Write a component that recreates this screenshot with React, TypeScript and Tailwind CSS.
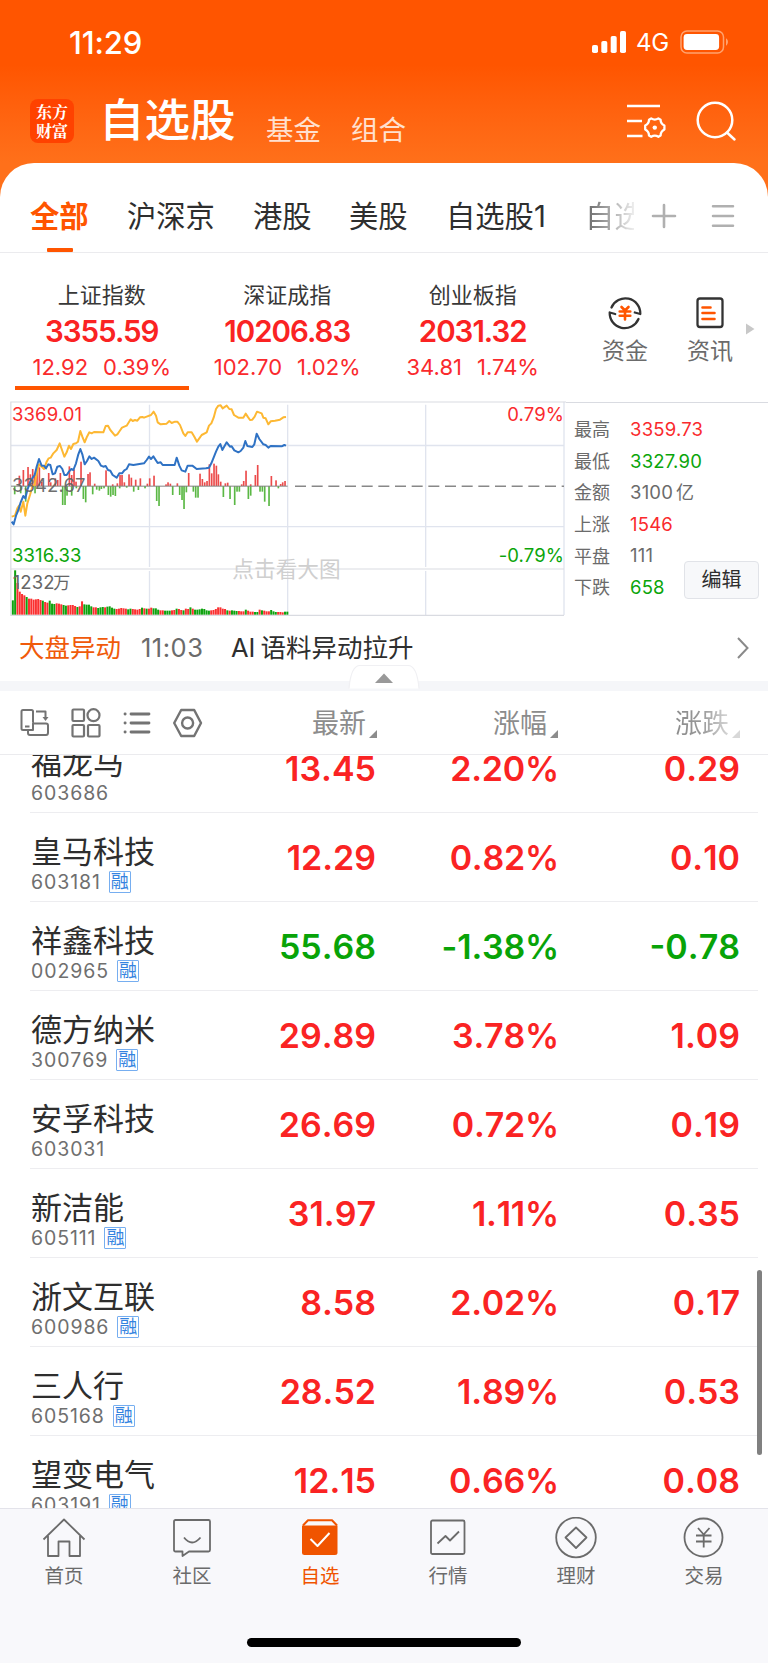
import React from 'react';

interface Stock {
  name: string;
  code: string;
  margin: boolean;
  price: string;
  percent: string;
  change: string;
}

const stocks: Stock[] = [
  { name: '福龙马', code: '603686', margin: false, price: '13.45', percent: '2.20%', change: '0.29' },
  { name: '皇马科技', code: '603181', margin: true, price: '12.29', percent: '0.82%', change: '0.10' },
  { name: '祥鑫科技', code: '002965', margin: true, price: '55.68', percent: '-1.38%', change: '-0.78' },
  { name: '德方纳米', code: '300769', margin: true, price: '29.89', percent: '3.78%', change: '1.09' },
  { name: '安孚科技', code: '603031', margin: false, price: '26.69', percent: '0.72%', change: '0.19' },
  { name: '新洁能', code: '605111', margin: true, price: '31.97', percent: '1.11%', change: '0.35' },
  { name: '浙文互联', code: '600986', margin: true, price: '8.58', percent: '2.02%', change: '0.17' },
  { name: '三人行', code: '605168', margin: true, price: '28.52', percent: '1.89%', change: '0.53' },
  { name: '望变电气', code: '603191', margin: true, price: '12.15', percent: '0.66%', change: '0.08' },
];

const indices = [
  { name: '上证指数', value: '3355.59', diff: '12.92', percent: '0.39%', active: true },
  { name: '深证成指', value: '10206.83', diff: '102.70', percent: '1.02%', active: false },
  { name: '创业板指', value: '2031.32', diff: '34.81', percent: '1.74%', active: false },
];

const stats = [
  { label: '最高', value: '3359.73', unit: '', color: 'text-[#fa2a2d]' },
  { label: '最低', value: '3327.90', unit: '', color: 'text-[#0aa50a]' },
  { label: '金额', value: '3100', unit: '亿', color: 'text-[#6b6b6b]' },
  { label: '上涨', value: '1546', unit: '', color: 'text-[#fa2a2d]' },
  { label: '平盘', value: '111', unit: '', color: 'text-[#6b6b6b]' },
  { label: '下跌', value: '658', unit: '', color: 'text-[#0aa50a]' },
];

// chart data, three units to the pixel
const avgLine =
  '35,365 45,362 52,340 57,332 62,350 70,320 76,362 82,325 90,300 97,275 104,270 110,235 117,208 125,215 132,222 140,200 146,190 152,188 160,175 170,165 179,145 186,165 193,185 200,172 207,152 213,162 220,147 228,145 234,140 241,108 247,125 254,142 261,125 268,112 275,115 282,111 310,112 317,93 324,92 331,105 345,122 352,118 359,108 366,98 373,95 380,92 392,73 398,78 405,75 412,77 420,67 427,66 432,68 440,65 453,60 461,50 468,62 473,82 482,88 500,86 508,78 515,84 525,80 532,80 540,90 550,115 556,123 563,112 575,112 583,125 591,140 605,120 620,112 627,92 634,85 641,68 648,42 655,32 662,31 668,40 680,32 688,42 695,43 702,60 715,68 730,68 737,56 743,65 750,75 757,74 764,65 771,50 785,55 790,68 797,70 805,88 812,79 825,77 840,74 850,67 858,66';
const priceLine =
  '35,380 41,388 48,362 55,345 62,322 70,303 76,310 82,285 90,262 98,248 104,240 110,215 117,192 125,212 132,212 138,220 145,208 151,210 158,238 165,235 172,215 180,213 187,222 193,240 200,240 207,230 214,222 220,225 228,205 235,178 241,162 247,178 254,208 261,198 268,184 275,192 282,188 295,198 303,212 310,215 317,213 324,225 331,227 338,240 350,248 358,235 366,235 373,226 380,222 387,208 400,210 432,205 440,195 447,185 453,192 460,184 473,204 482,202 488,210 524,210 530,188 538,212 545,226 556,230 563,212 577,212 590,222 618,220 627,218 634,205 648,170 655,155 661,147 667,165 680,142 690,155 695,154 703,166 715,172 722,168 730,158 736,138 742,153 757,156 763,148 770,116 778,132 790,148 797,150 805,158 812,153 845,154 853,150 858,152';

const upBars = [
  [58, 242], [70, 225], [84, 216], [91, 238], [98, 222], [104, 238], [111, 215], [118, 217], [125, 260], [146, 234],
  [152, 262], [166, 250], [173, 255], [181, 234], [208, 214], [215, 240], [222, 223], [228, 260], [243, 200], [264, 237],
  [270, 232], [284, 266], [318, 226], [338, 268], [352, 265], [360, 240], [366, 240], [373, 262], [387, 238], [394, 248],
  [407, 254], [421, 250], [442, 266], [449, 250], [462, 242], [498, 268], [504, 262], [511, 266], [532, 265], [566, 234],
  [600, 236], [607, 252], [614, 262], [621, 258], [628, 208], [635, 235], [642, 206], [649, 212], [655, 238], [662, 260],
  [676, 265], [683, 263], [725, 268], [731, 258], [738, 227], [752, 268], [766, 240], [773, 210], [814, 243], [828, 256],
  [842, 267], [848, 262], [855, 258],
];

const downBars = [
  [44, 298], [62, 295], [77, 320], [105, 295], [188, 330], [195, 330], [201, 302], [215, 302], [229, 280], [250, 312],
  [257, 322], [278, 298], [290, 284], [298, 287], [304, 282], [312, 280], [325, 300], [332, 305], [339, 300], [346, 303],
  [359, 280], [380, 278], [401, 290], [415, 285], [435, 280], [470, 318], [477, 333], [518, 300], [539, 300], [546, 315],
  [552, 342], [559, 292], [580, 290], [587, 308], [594, 308], [670, 306], [690, 312], [704, 330], [711, 290], [718, 290],
  [745, 312], [752, 302], [780, 290], [787, 290], [794, 320], [807, 333], [835, 280],
];

const volumes = [
  43, 133, 95, 69, 62, 58, 53, 48, 48, 45, 46, 47, 44, 42, 38, 36, 42, 33, 32, 34, 33, 31, 29, 27, 28, 29, 29, 26, 23, 25,
  40, 31, 30, 30, 25, 22, 22, 20, 22, 23, 22, 24, 25, 21, 18, 17, 18, 20, 19, 18, 16, 18, 17, 16, 15, 17, 21, 19, 18, 18,
  21, 19, 19, 15, 13, 13, 12, 12, 12, 13, 14, 18, 17, 14, 13, 18, 17, 22, 18, 15, 15, 16, 18, 17, 13, 12, 13, 14, 17, 22,
  22, 18, 17, 13, 12, 13, 12, 11, 11, 10, 10, 15, 12, 9, 9, 8, 8, 15, 13, 12, 10, 10, 14, 10, 8, 8, 8, 7, 9, 9,
];
const volumeColors =
  'ggrrrrgrrrrrrgrrgggrrrggrrrrgrrggggrrgggrggggrrrrrggrrrrgrgrrgggrrgggrrgrrgrrgrgggggggrrrrrrrgrgggrrrgrrrggrgrrrgggrrrg';

const RedUp = 'text-[#fa2323]';
const GreenDown = 'text-[#08a308]';

const StatusBar: React.FC = () => (
  <div className="flex h-[84px] items-center justify-between pl-[69px] pr-[38px] text-white">
    <span className="text-[31px] font-medium leading-none tracking-[-0.1px]">11:29</span>
    <div className="flex items-center">
      <svg width="34" height="22" viewBox="0 0 34 22" fill="#fff">
        <rect x="0" y="14" width="6" height="8" rx="1.8" />
        <rect x="9.3" y="10" width="6" height="12" rx="1.8" />
        <rect x="18.7" y="5" width="6" height="17" rx="1.8" />
        <rect x="28" y="0" width="6" height="22" rx="1.8" />
      </svg>
      <span className="ml-[10px] mt-[2px] w-[44px] text-[24px] leading-none tracking-[-0.2px]">4G</span>
      <svg width="50" height="24" viewBox="0 0 50 24" fill="none">
        <rect x="1" y="1" width="42.5" height="22" rx="6" stroke="#ffa36f" strokeWidth="1.5" />
        <rect x="3.6" y="4" width="35.5" height="16" rx="3.4" fill="#fff" />
        <path d="M46 8.3c2.6 1.6 2.6 5.8 0 7.4z" fill="#ffa36f" />
      </svg>
    </div>
  </div>
);

const TitleBar: React.FC = () => (
  <div className="flex h-[79px] items-start pl-[30px]">
    <div className="mt-[15px] flex h-[44px] w-[44px] flex-col items-center justify-center rounded-[8px] bg-[#ff4200] font-['Noto_Serif_CJK_SC','Noto_Sans_CJK_SC',serif] text-[16px] font-bold leading-[19px] text-white">
      <span>东方</span>
      <span>财富</span>
    </div>
    <h1 className="ml-[25px] mt-[11px] w-[138px] whitespace-nowrap text-[45.5px] font-medium leading-[52px] text-white">自选股</h1>
    <span className="ml-[29px] mt-[28px] w-[54px] whitespace-nowrap text-[27.5px] leading-[36px] text-[#ffe0cf]">基金</span>
    <span className="ml-[31px] mt-[28px] w-[54px] whitespace-nowrap text-[27.5px] leading-[36px] text-[#ffe0cf]">组合</span>
    <svg className="ml-[221px] mt-[18px]" width="42" height="42" viewBox="0 0 42 42" fill="none" stroke="#fff" strokeWidth="2.6">
      <path d="M1 4h33M1 19h15M1 34h15.5" />
      <path
        d="M25.2 16.400Q28.800 18.800 32.400 16.400L34.600 17.700Q34.600 21.600 38.400 23.600V27.600Q34.600 29.600 34.600 33.500L32.400 34.800Q28.800 32.400 25.200 34.800L23 33.500Q23 29.600 19.200 27.600V23.600Q23 21.600 23 17.700z"
        strokeWidth="2.3"
        strokeLinejoin="round"
      />
      <circle cx="28.8" cy="25.6" r="2.2" fill="#fff" stroke="none" />
    </svg>
    <svg className="ml-[27px] mt-[17px]" width="42" height="42" viewBox="0 0 42 42" fill="none" stroke="#fff" strokeWidth="2.5" strokeLinecap="round">
      <circle cx="20" cy="19" r="17.3" />
      <path d="M32 31.5l7.500 7" />
    </svg>
  </div>
);

const GroupTabs: React.FC = () => (
  <div className="flex h-[90px] items-center border-b border-[#ebebee] pl-[30px] pt-[19px] text-[29.3px] leading-[42px] text-[#2e2e2e]">
    <div className="relative w-[97px] font-bold text-[#ff5500]">
      全部
      <span className="absolute -bottom-[14px] left-[17px] h-[4px] w-[26px] rounded-[1px] bg-[#ff5500]" />
    </div>
    <span className="w-[126px]">沪深京</span>
    <span className="w-[96px]">港股</span>
    <span className="w-[97px]">美股</span>
    <span className="w-[139px] whitespace-nowrap">自选股1</span>
    <span className="w-[49px] overflow-hidden whitespace-nowrap bg-gradient-to-r from-[#666] to-[#eee] bg-clip-text text-transparent">自选股2</span>
    <svg className="-mt-[2px] ml-[17px]" width="26" height="26" viewBox="0 0 26 26" stroke="#b0b0b0" strokeWidth="2.6" strokeLinecap="round">
      <path d="M13 2v22M2 13h22" />
    </svg>
    <svg className="-mt-[2px] ml-[34px]" width="24" height="24" viewBox="0 0 24 24" stroke="#b0b0b0" strokeWidth="2.5" strokeLinecap="round">
      <path d="M2 2.3h20M2 12h20M2 21.7h20" />
    </svg>
  </div>
);

const IndexPanel: React.FC = () => (
  <div className="flex h-[148px] pl-[9px]">
    {indices.map((item) => (
      <div key={item.name} className="relative flex w-[185.5px] flex-col items-center">
        <span className="mt-[27px] text-[22px] leading-[30px] text-[#383838]">{item.name}</span>
        <span className="mt-[5px] text-[29.5px] font-semibold leading-[32px] tracking-[-1px] text-[#fa2323]">{item.value}</span>
        <span className="mt-[6px] flex gap-[15px] text-[22px] leading-[28px] text-[#fa2a2d]">
          <span>{item.diff}</span>
          <span>{item.percent}</span>
        </span>
        {item.active && <span className="absolute bottom-[11px] left-[6px] h-[4px] w-[174px] bg-[#ff5500]" />}
      </div>
    ))}
    <div className="ml-[17px] flex w-[85px] flex-col items-center pt-[42px] text-[23px] leading-[32px] text-[#6b6b6b]">
      <svg width="36" height="36" viewBox="0 0 36 36" fill="none" stroke="#333" strokeWidth="2.3" strokeLinecap="round" strokeLinejoin="round">
        <path d="M4.5 12.5A15 15 0 0 1 33.3 19L27.8 17.5" />
        <path d="M31.5 24A15 15 0 0 1 2.7 17.5L8.2 19" />
        <path d="M14.500 12l3.500 3.500 3.500-3.500M12.700 16.5h10.600M12.700 20.800h10.600M18 16v8.500" stroke="#ff5500" strokeWidth="2.6" />
      </svg>
      <span className="mt-[4px]">资金</span>
    </div>
    <div className="flex w-[85px] flex-col items-center pt-[42px] text-[23px] leading-[32px] text-[#6b6b6b]">
      <svg width="36" height="36" viewBox="0 0 36 36" fill="none" stroke="#333" strokeWidth="2.3">
        <rect x="5.5" y="3.5" width="25" height="28.5" rx="2.5" />
        <path d="M10.5 12.5h8M10.5 18h12M10.5 24h12" stroke="#ff5500" strokeWidth="2.6" strokeLinecap="round" />
      </svg>
      <span className="mt-[4px]">资讯</span>
    </div>
    <svg className="-ml-[8px] mt-[70px]" width="10" height="12" viewBox="0 0 10 12">
      <path d="M1 .5L9.5 6L1 11.5z" fill="#c8c8c8" />
    </svg>
  </div>
);

const Chart: React.FC = () => (
  <svg className="shrink-0" width="566" height="216" viewBox="0 18 1698 648" fill="none">
    <g stroke="#e0e4ee" strokeWidth="4">
      <path d="M33 151.5H1692M33 395H1692" />
      <path d="M448.5 29V516M448.5 528V660M863 29V516M863 528V660M1277 29V516M1277 528V660" />
      <path d="M1692 20V660" />
    </g>
    <path d="M1698 21H32.5V661H1692M32 522H1692" stroke="#d9dbe1" strokeWidth="3.5" />
    <text x="697" y="546" fontSize="65" fill="#cfcfcf">点击看大图</text>
    <g fill="#ec4b4b">
      {upBars.map(([x, y]) => (
        <rect key={x} x={x - 2.4} y={y} width="5" height={273 - y} />
      ))}
    </g>
    <g fill="#5bb845">
      {downBars.map(([x, y]) => (
        <rect key={x} x={x - 2.4} y={273} width="5" height={y - 273} />
      ))}
    </g>
    <path d="M33 273.5H863" stroke="#858585" strokeWidth="3" />
    <path d="M885 273.5H1692" stroke="#888" strokeWidth="4.5" strokeDasharray="33 17" />
    {volumes.map((v, i) => (
      <rect key={i} x={35.5 + i * 6.92} y={659 - v} width="6" height={v} fill={volumeColors[i] === 'r' ? '#fa3030' : '#0ea20e'} />
    ))}
    <polyline points={avgLine} stroke="#fdb833" strokeWidth="6" strokeLinejoin="round" />
    <polyline points={priceLine} stroke="#2f72c4" strokeWidth="6" strokeLinejoin="round" />
    <g fontSize="55.5" letterSpacing="0.3">
      <text x="36" y="79" fill="#fa2a2d">3369.01</text>
      <text x="36" y="291" fill="#666" fillOpacity="0.95">3342.67</text>
      <text x="36" y="501" fill="#0aa50a">3316.33</text>
      <text x="38" y="581" fill="#666">
        1232
        <tspan dx="-4" fontSize="51">万</tspan>
      </text>
      <text x="1692" y="79" fill="#fa2a2d" textAnchor="end">0.79%</text>
      <text x="1692" y="501" fill="#0aa50a" textAnchor="end">-0.79%</text>
    </g>
  </svg>
);

const MarketSection: React.FC = () => (
  <div className="flex h-[216px]">
    <Chart />
    <div className="relative mt-px flex-1 border-t border-[#d9dbe1] pl-[8px] pt-[11px]">
      {stats.map((s) => (
        <div key={s.label} className="flex h-[31.6px] items-center text-[18px]">
          <span className="w-[56px] text-[#6b6b6b]">{s.label}</span>
          <span className={`text-[18.5px] tracking-[0.2px] ${s.color}`}>{s.value}</span>
          {s.unit && <span className="ml-[3px] text-[#6b6b6b]">{s.unit}</span>}
        </div>
      ))}
      <button className="absolute bottom-[18px] right-[9px] h-[38px] w-[75px] rounded-[4px] border border-[#e1e3e8] bg-[#f7f8fa] text-[20px] leading-none text-[#2e2e2e]">
        编辑
      </button>
    </div>
  </div>
);

const NewsRow: React.FC = () => (
  <div className="relative flex h-[64px] items-center pb-[2px] pl-[19px] pr-[19px] text-[25.5px] leading-[36px]">
    <span className="w-[122px] text-[#f05a0a]">大盘异动</span>
    <span className="w-[90px] tracking-[0.5px] text-[#6b6b6b]">11:03</span>
    <div className="flex flex-1 gap-[5px] text-[#2e2e2e]">
      <span>AI</span>
      <span>语料异动拉升</span>
    </div>
    <svg width="12" height="22" viewBox="0 0 12 22" fill="none" stroke="#8a8a8a" strokeWidth="2">
      <path d="M1 1l9.5 10L1 21" />
    </svg>
    <svg className="absolute -bottom-[8px] left-[348px]" width="72" height="25" viewBox="0 0 72 25">
      <path d="M1 24.5Q3 1.5 12 1.5H60Q69 1.5 71 24.5" fill="#fff" stroke="#f0f0f3" strokeWidth="1.2" />
      <path d="M27 19L36 9.5L45 19z" fill="#999" />
    </svg>
  </div>
);

const SortArrow: React.FC = () => (
  <svg className="mb-[6px] ml-[3px] self-end" width="8" height="8" viewBox="0 0 8 8">
    <path d="M8 0V8H0z" fill="currentColor" />
  </svg>
);

const ListHeader: React.FC = () => (
  <div className="flex h-[64px] items-center border-b border-[#ebebee] pl-[19px]">
    <svg width="31" height="30" viewBox="0 0 31 30" fill="none" stroke="#737373" strokeWidth="2" strokeLinejoin="round">
      <path d="M14 14.5V3.5Q14 2 12.5 2H4Q2.500 2 2.5 3.5V20.5Q2.5 22 4 22H14V15.5H27Q29 15.5 29 17.5V24.5Q29 27 27 27H11Q9 27 9 25V22" />
      <path d="M6 18.5h4.5M17 3.5H26.5V11" />
      <path d="M23.5 9h6l-3 4z" fill="#737373" stroke="none" />
    </svg>
    <svg className="ml-[20px]" width="31" height="30" viewBox="0 0 31 30" fill="none" stroke="#737373" strokeWidth="2.200">
      <rect x="2.5" y="1.5" width="11.5" height="11.5" rx="1" />
      <circle cx="23.5" cy="7.2" r="6" />
      <rect x="2.5" y="17" width="11.5" height="11.5" rx="1" />
      <rect x="18" y="17" width="11.5" height="11.5" rx="1" />
    </svg>
    <svg className="ml-[21px]" width="30" height="30" viewBox="0 0 30 30" fill="none" stroke="#737373" strokeWidth="2.8" strokeLinecap="round">
      <path d="M9 6h18M9 15h18M9 24h18M3 6h.2M3 15h.2M3 24h.2" />
    </svg>
    <svg className="ml-[20px]" width="31" height="30" viewBox="0 0 31 30" fill="none" stroke="#737373" strokeWidth="2.4" strokeLinejoin="round">
      <path d="M9.2 2h13L29 15l-6.8 13h-13L2.2 15z" />
      <circle cx="15.6" cy="15" r="5.5" />
    </svg>
    <div className="ml-[109px] mt-[3px] flex w-[181px] text-[27px] leading-[40px] text-[#8c8c8c]">
      最新
      <SortArrow />
    </div>
    <div className="mt-[3px] flex w-[182px] text-[27px] leading-[40px] text-[#8c8c8c]">
      涨幅
      <SortArrow />
    </div>
    <div className="mt-[3px] flex text-[27px] leading-[40px] text-[#d8d8d8]">
      <span className="bg-gradient-to-r from-[#8c8c8c] via-[#999] to-[#d8d8d8] bg-clip-text text-transparent">涨跌</span>
      <SortArrow />
    </div>
  </div>
);

const StockRow: React.FC<{ stock: Stock }> = ({ stock }) => {
  const color = stock.change.startsWith('-') ? GreenDown : RedUp;
  return (
    <div className="ml-[30px] mr-[10px] flex h-[89px] shrink-0 border-b border-[#ededf0]">
      <div className="w-[180px] pl-[1px]">
        <div className="mt-[20px] h-[38px] whitespace-nowrap text-[31px] leading-[38px] text-[#2e2e2e]">{stock.name}</div>
        <div className="flex h-[22px] items-center">
          <span className="text-[19.5px] leading-[22px] tracking-[0.9px] [font-kerning:none] text-[#6f6f6f]">{stock.code}</span>
          {stock.margin && (
            <span className="ml-[8px] flex h-[22px] w-[22px] items-center justify-center rounded-[1px] border border-[#76aef0] text-[18px] leading-none text-[#3483e0]">
              融
            </span>
          )}
        </div>
      </div>
      <div className={`mt-[24px] flex text-right text-[34px] font-semibold leading-[42px] [font-kerning:none] ${color}`}>
        <span className="w-[166px]">{stock.price}</span>
        <span className="w-[183px] tracking-[-0.2px]">{stock.percent}</span>
        <span className="w-[181px]">{stock.change}</span>
      </div>
    </div>
  );
};

const navItems = [
  {
    label: '首页',
    active: false,
    icon: (
      <path d="M1.5 22.5L22 2.5L42.5 22.5M6 19V39H16.5V24.5H27.5V39H38V19" />
    ),
  },
  {
    label: '社区',
    active: false,
    icon: (
      <>
        <path d="M5.5 3H38.5Q40 3 40 4.5V33Q40 34.5 38.5 34.5H19L12.5 39V34.5H5.5Q4 34.5 4 33V4.5Q4 3 5.5 3z" />
        <path d="M14 20.5Q22 30.5 30.5 20.5" />
      </>
    ),
  },
  {
    label: '自选',
    active: true,
    icon: (
      <>
        <path d="M5 8.500L10 3.200H34L39 8.500" strokeWidth="2" />
        <path d="M4 8.500H39.5V35.5Q39.5 38 37 38H6.5Q4 38 4 35.5z" fill="#f05400" stroke="none" />
        <path d="M12.5 22L19.5 29L31.5 16" stroke="#fff" strokeWidth="2" />
      </>
    ),
  },
  {
    label: '行情',
    active: false,
    icon: (
      <>
        <rect x="5" y="3.5" width="33.5" height="33.5" rx="1.5" />
        <path d="M11.5 26.5L19.5 19L24 23.5L33 14.5" />
      </>
    ),
  },
  {
    label: '理财',
    active: false,
    icon: (
      <>
        <circle cx="22" cy="20.5" r="19.8" />
        <path d="M22 10.5L32.5 20.5L22 31L11.5 20.5z" />
      </>
    ),
  },
  {
    label: '交易',
    active: false,
    icon: (
      <>
        <circle cx="21.5" cy="20.5" r="19" />
        <path d="M16 11L21.7 17.5L27.5 11M14 18.5H29.5M14 24.5H29.5M21.7 17.5V30.5" />
      </>
    ),
  },
];

const BottomNav: React.FC = () => (
  <nav className="h-[155px] border-t border-[#e3e3ea] bg-[#f8f8fb]">
    <div className="flex pt-[8px]">
      {navItems.map((item) => (
        <div key={item.label} className={`flex w-[128px] flex-col items-center ${item.active ? 'text-[#f05400]' : 'text-[#6b6b6b]'}`}>
          <svg width="44" height="42" viewBox="0 0 44 42" fill="none" stroke="currentColor" strokeWidth="1.8" strokeLinejoin="round">
            {item.icon}
          </svg>
          <span className="mt-[3px] text-[19.5px] leading-[28px]">{item.label}</span>
        </div>
      ))}
    </div>
    <div className="mx-auto mt-[48px] h-[9px] w-[274px] rounded-full bg-black" />
  </nav>
);

export default function App() {
  return (
    <div className="flex h-[1663px] w-[768px] flex-col overflow-hidden bg-white font-[Inter,'Noto_Sans_CJK_SC',sans-serif]">
      <header className="bg-gradient-to-b from-[#ff5500] from-40% to-[#ff701a]">
        <StatusBar />
        <TitleBar />
      </header>
      <div className="bg-[#ff701a]">
        <div className="rounded-t-[34px] bg-white">
          <GroupTabs />
        </div>
      </div>
      <IndexPanel />
      <MarketSection />
      <NewsRow />
      <div className="h-[10px] bg-[#f5f6f9]" />
      <ListHeader />
      <main className="relative flex h-[753px] flex-col overflow-hidden">
        <div className="-mt-[31px] flex flex-col">
          {stocks.map((stock) => (
            <StockRow key={stock.code} stock={stock} />
          ))}
        </div>
        <span className="absolute right-[6px] top-[515px] h-[185px] w-[5px] rounded-full bg-[#808080]" />
      </main>
      <BottomNav />
    </div>
  );
}
